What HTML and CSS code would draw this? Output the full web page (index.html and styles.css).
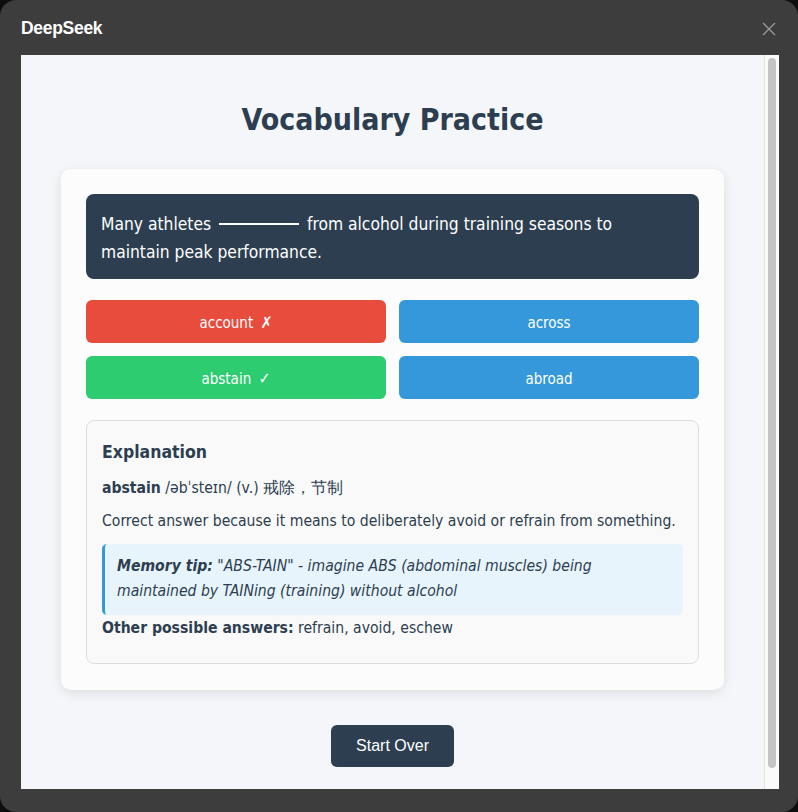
FILE: index.html
```html
<!DOCTYPE html>
<html lang="en">
<head>
<meta charset="utf-8">
<title>DeepSeek</title>
<link rel="stylesheet" href="styles.css">
</head>
<body>
<div class="window">
  <div class="titlebar">
    <span class="title">DeepSeek</span>
    <svg class="close" width="14" height="14" viewBox="0 0 14 14"><path d="M1 1 L13 13 M13 1 L1 13" stroke="#9b9b9b" stroke-width="1.3" fill="none"/></svg>
  </div>
  <div class="content">
    <div class="scroller">
      <div class="page">
        <h1 class="heading">Vocabulary Practice</h1>
        <div class="card">
          <div class="question">Many athletes <span class="blank"></span> from alcohol during training seasons to maintain peak performance.</div>
          <div class="options">
            <button class="opt wrong">account <span class="mark">&#x2717;</span></button>
            <button class="opt">across</button>
            <button class="opt right">abstain <span class="mark">&#x2713;</span></button>
            <button class="opt">abroad</button>
          </div>
          <div class="explain">
            <h3 class="ex-title">Explanation</h3>
            <p class="ex-line"><strong>abstain</strong> /əbˈsteɪn/ (v.) 戒除，节制</p>
            <p class="ex-line gap">Correct answer because it means to deliberately avoid or refrain from something.</p>
            <div class="tip"><strong>Memory tip:</strong> "ABS-TAIN" - imagine ABS (abdominal muscles) being maintained by TAINing (training) without alcohol</div>
            <p class="ex-line last"><strong>Other possible answers:</strong> refrain, avoid, eschew</p>
          </div>
        </div>
        <div class="actions">
          <button class="restart">Start Over</button>
        </div>
      </div>
    </div>
    <div class="scrollbar"><div class="thumb"></div></div>
  </div>
</div>
</body>
</html>
```
FILE: styles.css
```css
html, body {
  margin: 0;
  padding: 0;
  background: #0e0e0e;
}
.window {
  width: 798px;
  height: 812px;
  background: #3d3d3d;
  border-radius: 16px;
  display: flex;
  flex-direction: column;
  box-sizing: border-box;
}
.titlebar {
  height: 55px;
  display: flex;
  align-items: center;
  justify-content: space-between;
  padding: 2px 22px 0 21px;
  box-sizing: border-box;
}
.title {
  font-family: "Liberation Sans", Arial, sans-serif;
  color: #ffffff;
  font-size: 17.5px;
  font-weight: bold;
  letter-spacing: -0.3px;
}
.close {
  display: block;
}
.content {
  margin: 0 19px 0 21px;
  height: 734px;
  display: flex;
  background: #f4f6f9;
  font-family: "DejaVu Sans Condensed", "DejaVu Sans", sans-serif;
  color: #2c3e50;
}
.scroller {
  flex: 1;
  overflow: hidden;
}
.scrollbar {
  width: 14px;
  background: #fafafa;
  border-left: 1px solid #e4e4e4;
  flex-shrink: 0;
}
.thumb {
  margin: 3px 3px 0 3px;
  height: 710px;
  border-radius: 4px;
  background: #c4c4c4;
}
.page {
  padding: 45px 40px 48px;
}
.heading {
  margin: 0 0 29px;
  text-align: center;
  font-size: 30px;
  line-height: 40px;
  font-weight: bold;
  color: #2c3e50;
}
.card {
  background: #fcfcfd;
  border-radius: 10px;
  box-shadow: 0 3px 12px rgba(0, 0, 0, 0.1);
  padding: 25px 25px 26px;
}
.question {
  background: #2c3e50;
  color: #ffffff;
  border-radius: 8px;
  padding: 16px 15px 13px;
  font-size: 17.3px;
  line-height: 28px;
}
.blank {
  display: inline-block;
  width: 80px;
  height: 2px;
  background: #ffffff;
  vertical-align: 5px;
  margin: 0 3px;
}
.options {
  margin-top: 21px;
  display: grid;
  grid-template-columns: 1fr 1fr;
  gap: 13px;
}
.opt {
  height: 43px;
  border: none;
  border-radius: 6px;
  background: #3498db;
  color: #ffffff;
  font-family: "DejaVu Sans Condensed", "DejaVu Sans", sans-serif;
  font-size: 15px;
  padding: 2px 0 0;
}
.mark {
  margin-left: 3px;
  font-weight: bold;
  font-size: 16px;
}
.opt.wrong {
  background: #e74c3c;
}
.opt.right {
  background: #2ecc71;
}
.explain {
  margin-top: 21px;
  border: 1px solid #dddddd;
  border-radius: 8px;
  background: #f9f9f9;
  padding: 15px 15px 13px;
}
.ex-title {
  margin: 5px 0 13px;
  font-size: 17.5px;
  line-height: 22px;
  font-weight: bold;
}
.ex-line {
  margin: 0 0 9px;
  font-size: 15.6px;
  line-height: 24px;
}
.ex-line.gap {
  margin-bottom: 11px;
}
.ex-line.last {
  margin: 1px 0 10px;
}
.tip {
  background: #e8f4fc;
  border-left: 3px solid #3498db;
  border-radius: 5px;
  padding: 10px 12px 11px;
  font-size: 15.6px;
  line-height: 25px;
  font-style: italic;
}
.actions {
  margin-top: 35px;
  display: flex;
  justify-content: center;
}
.restart {
  width: 123px;
  height: 42px;
  border: none;
  border-radius: 6px;
  background: #2c3e50;
  color: #ffffff;
  font-family: "Liberation Sans", Arial, sans-serif;
  font-size: 16px;
  padding: 0;
}
```
